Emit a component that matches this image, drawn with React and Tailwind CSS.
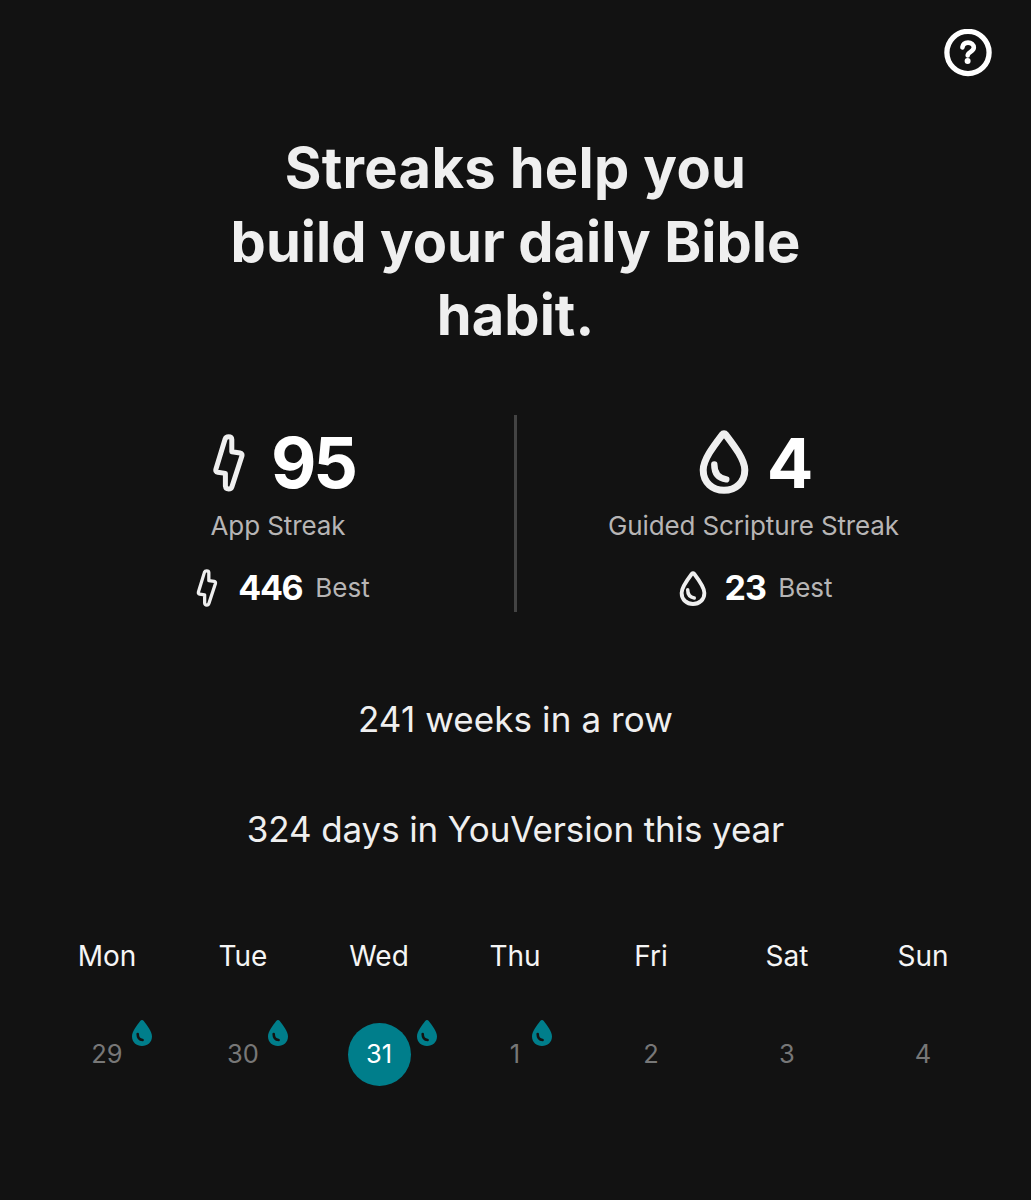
const days = [
    { name: 'Mon', date: 29, guided: true },
    { name: 'Tue', date: 30, guided: true },
    { name: 'Wed', date: 31, guided: true, active: true },
    { name: 'Thu', date: 1, guided: true },
    { name: 'Fri', date: 2 },
    { name: 'Sat', date: 3 },
    { name: 'Sun', date: 4 },
];

const BoltIcon = ({ className }) => (
    <svg viewBox="0 0 32 58" fill="none" stroke="currentColor" className={className}>
        <path
            d="M12.2 4.8 L2.9 35.2 Q2.3 37.8 4.7 38.2 L12.4 39.4 L12.4 52 Q12.8 55 15.6 55 Q18.2 55 19 52.4 L28.9 22 Q29.5 19.4 27.1 19 L18.8 17.8 L18.8 5.4 Q18.6 2.7 15.6 2.7 Q13 2.7 12.2 4.8 Z"
            strokeWidth="5"
            strokeLinejoin="round"
        />
    </svg>
);

const DropIcon = ({ className }) => (
    <svg viewBox="0 0 50 64" fill="none" stroke="currentColor" className={className}>
        <path
            d="M25 3.8 Q26 3.8 27 5 C35 15.5 45.8 29.5 45.8 40 C45.8 52.5 36.5 60.3 25 60.3 C13.5 60.3 4.2 52.5 4.2 40 C4.2 29.5 15 15.5 23 5 Q24 3.8 25 3.8 Z"
            strokeWidth="7"
            strokeLinejoin="round"
        />
        <path d="M15.3 34.5 C15.3 43 19 48.2 27.3 49.3" strokeWidth="6.4" strokeLinecap="round" />
    </svg>
);

const FilledDropIcon = ({ className }) => (
    <svg viewBox="0 0 20 26" fill="none" className={className}>
        <path
            d="M10 0 Q11 0 11.8 1 C15 5.2 20 11.5 20 16.5 C20 22.2 15.5 26 10 26 C4.5 26 0 22.2 0 16.5 C0 11.5 5 5.2 8.2 1 Q9 0 10 0 Z"
            fill="currentColor"
        />
        <path d="M5.7 14 Q5.7 19.6 10.6 20" stroke="#121212" strokeWidth="2.6" strokeLinecap="round" />
    </svg>
);

const HelpIcon = () => (
    <svg viewBox="0 0 48 48" fill="none" stroke="currentColor" className="size-12">
        <circle cx="24" cy="23.5" r="21.1" strokeWidth="5.3" />
        <path
            d="M18.4 18.4 C18.9 15.2 21.1 13.6 24 13.6 C27.3 13.6 29.8 15.7 29.8 18.6 C29.8 22.8 23.9 22.8 23.7 26.4"
            strokeWidth="4.6"
            strokeLinecap="round"
        />
        <circle cx="23.6" cy="32" r="3" fill="currentColor" stroke="none" />
    </svg>
);

const App = () => {
    return (
        <div className="h-[1200px] w-[1031px] overflow-hidden bg-[#121212] font-['Inter',sans-serif] text-[#efefef]">
            <header className="flex h-[132px] justify-end pt-[29px] pr-[39px] text-white">
                <button className="h-12" aria-label="Help">
                    <HelpIcon />
                </button>
            </header>

            <h1 className="text-center text-[56px] leading-[73.5px] font-bold tracking-[0.05px]">
                <span className="tracking-[0.35px]">Streaks help you</span>
                <br />
                build your daily Bible
                <br />
                habit.
            </h1>

            {/* Streak counters */}
            <section className="mt-[62px] flex h-[197px] px-[41px]">
                <div className="flex flex-1 flex-col items-center">
                    <div className="mt-3 ml-[13px] flex h-[72px] items-center gap-[26px]">
                        <BoltIcon className="h-[58px] w-8" />
                        <span className="text-[70px] leading-[72px] font-bold tracking-[-3px] text-white">95</span>
                    </div>
                    <p className="mt-[11px] ml-px text-[26px] leading-8 tracking-[-0.1px] text-[#b7b5b5]">App Streak</p>
                    <div className="mt-[26px] ml-[11px] flex h-10 items-center">
                        <BoltIcon className="h-[38px] w-[22px]" />
                        <span className="ml-5 text-[34px] leading-10 font-bold tracking-[-1.4px] text-white">446</span>
                        <span className="ml-[13px] text-[26px] leading-10 text-[#b7b5b5]">Best</span>
                    </div>
                </div>
                <div className="w-[3px] bg-[#434343]" />
                <div className="flex flex-1 flex-col items-center">
                    <div className="mt-3 ml-[3px] flex h-[72px] items-center gap-[18px]">
                        <DropIcon className="mb-0.5 h-16 w-[50px]" />
                        <span className="text-[69px] leading-[72px] font-bold tracking-[-2px] text-white">4</span>
                    </div>
                    <p className="mt-[11px] text-[26px] leading-8 tracking-[-0.13px] text-[#b7b5b5]">Guided Scripture Streak</p>
                    <div className="mt-[26px] ml-[5px] flex h-10 items-center">
                        <DropIcon className="mt-0.5 h-[35px] w-7" />
                        <span className="ml-[17px] text-[34px] leading-10 font-bold tracking-[-0.8px] text-white">23</span>
                        <span className="ml-3 text-[26px] leading-10 text-[#b7b5b5]">Best</span>
                    </div>
                </div>
            </section>

            <div className="mt-[82px] flex flex-col gap-[60px] text-center text-[35px] leading-[50px]">
                <p className="tracking-[0.1px]">241 weeks in a row</p>
                <p className="tracking-[-0.12px]">324 days in YouVersion this year</p>
            </div>

            {/* Week calendar */}
            <div className="mt-[82px] grid grid-cols-7 pr-10 pl-[39px]">
                {days.map((day) => (
                    <div key={day.name} className="flex flex-col items-center">
                        <span className="text-[28px] leading-10 text-[#f5f5f5]">{day.name}</span>
                        <div className="relative mt-[47px] flex h-[63px] items-center">
                            {day.active ? (
                                <span className="flex size-[63px] items-center justify-center rounded-full bg-[#007e8b] text-[25.5px] text-white">
                                    {day.date}
                                </span>
                            ) : (
                                <span className="min-w-[21px] px-[3px] text-center text-[25.5px] text-[#777777]">{day.date}</span>
                            )}
                            {day.guided && (
                                <FilledDropIcon className="absolute top-[-3px] left-full ml-1.5 h-[26px] w-5 text-[#007e8b]" />
                            )}
                        </div>
                    </div>
                ))}
            </div>
        </div>
    );
};

export default App;
